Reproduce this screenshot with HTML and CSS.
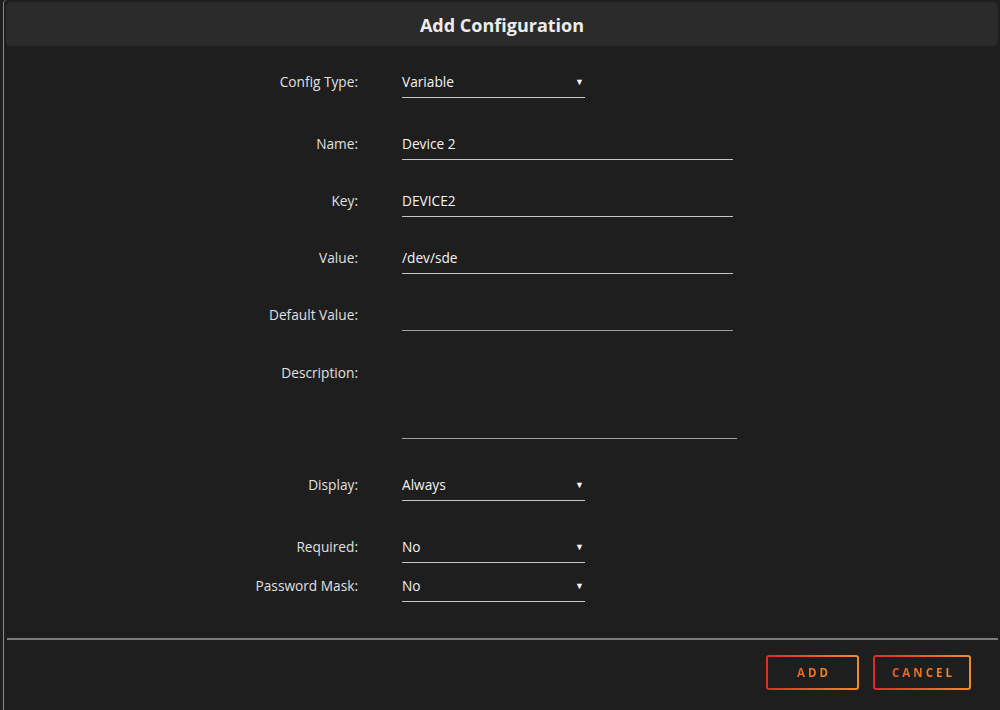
FILE: index.html
```html
<!DOCTYPE html>
<html lang="en">
<head>
  <meta charset="UTF-8">
  <title>Add Configuration</title>
  <link rel="stylesheet" href="styles.css">
</head>
<body>
  <div class="modal">
    <header class="modal-title">Add Configuration</header>

    <form class="config-form">
      <div class="row row-first">
        <label class="label">Config Type:</label>
        <div class="field select">Variable<span class="arrow">&#9660;</span></div>
      </div>
      <div class="row row-name">
        <label class="label">Name:</label>
        <div class="field text">Device 2</div>
      </div>
      <div class="row row-gap">
        <label class="label">Key:</label>
        <div class="field text">DEVICE2</div>
      </div>
      <div class="row row-gap">
        <label class="label">Value:</label>
        <div class="field text">/dev/sde</div>
      </div>
      <div class="row row-gap">
        <label class="label">Default Value:</label>
        <div class="field text empty"></div>
      </div>
      <div class="row row-desc">
        <label class="label">Description:</label>
        <div class="field textarea"></div>
      </div>
      <div class="row row-display">
        <label class="label">Display:</label>
        <div class="field select">Always<span class="arrow">&#9660;</span></div>
      </div>
      <div class="row row-required">
        <label class="label">Required:</label>
        <div class="field select">No<span class="arrow">&#9660;</span></div>
      </div>
      <div class="row row-tight">
        <label class="label">Password Mask:</label>
        <div class="field select">No<span class="arrow">&#9660;</span></div>
      </div>
    </form>

    <footer class="modal-footer">
      <button class="btn btn-add"><span>ADD</span></button>
      <button class="btn btn-cancel"><span>CANCEL</span></button>
    </footer>
  </div>
</body>
</html>
```

FILE: styles.css
```css
html, body {
  margin: 0;
  padding: 0;
  background: #1e1e1e;
  font-family: "Open Sans", "Noto Sans", sans-serif;
  color: #e6e6e6;
}
.modal {
  margin-left: 3px;
  height: 710px;
  box-sizing: border-box;
  padding: 2px 2px 0 1px;
  border-left: 1px solid #8a8a8a;
  border-top-left-radius: 4px;
}
.modal-title {
  height: 44px;
  box-sizing: border-box;
  padding-top: 1px;
  margin-left: 1px;
  background: #2b2b2b;
  border-radius: 5px;
  text-align: center;
  line-height: 44px;
  font-size: 18px;
  font-weight: 700;
  color: #ececec;
}
.config-form {
  padding-bottom: 36px;
}
.row {
  display: flex;
  align-items: flex-start;
}
.label {
  width: 353px;
  text-align: right;
  font-size: 13.7px;
  line-height: 31px;
  color: #e0e0e0;
}
.field {
  margin-left: 44px;
  box-sizing: border-box;
  height: 32px;
  line-height: 31px;
  font-size: 13.7px;
  color: #f4f4f4;
  border-bottom: 1px solid #c4c4c4;
}
.select {
  width: 183px;
  display: flex;
  justify-content: space-between;
}
.arrow {
  font-size: 9px;
  padding-right: 1px;
}
.text {
  width: 331px;
}
.empty {
  border-bottom-color: #a0a0a0;
}
.textarea {
  width: 335px;
  height: 82px;
  border-bottom-color: #a0a0a0;
}
.row-first { margin-top: 20px; }
.row-name { margin-top: 30px; }
.row-gap { margin-top: 25px; }
.row-desc { margin-top: 26px; }
.row-display { margin-top: 30px; }
.row-required { margin-top: 30px; }
.row-tight { margin-top: 7px; }
.modal-footer {
  margin-left: 2px;
  border-top: 2px solid #7c7c7c;
  display: flex;
  justify-content: flex-end;
  gap: 14px;
  padding: 15px 27px 0 0;
}
.btn {
  height: 35px;
  border: 2px solid transparent;
  border-radius: 3px;
  background: linear-gradient(#1e1e1e, #1e1e1e) padding-box,
              linear-gradient(90deg, #e02a26, #f08c2c) border-box;
  font-family: "Open Sans", "Noto Sans", sans-serif;
  font-size: 11.5px;
  font-weight: 700;
  letter-spacing: 3px;
  cursor: pointer;
  padding: 0;
}
.btn span {
  background: linear-gradient(90deg, #ec5a28, #f38e2a);
  -webkit-background-clip: text;
  background-clip: text;
  color: transparent;
  padding-left: 3px;
}
.btn-add { width: 93px; }
.btn-cancel { width: 98px; }
```
